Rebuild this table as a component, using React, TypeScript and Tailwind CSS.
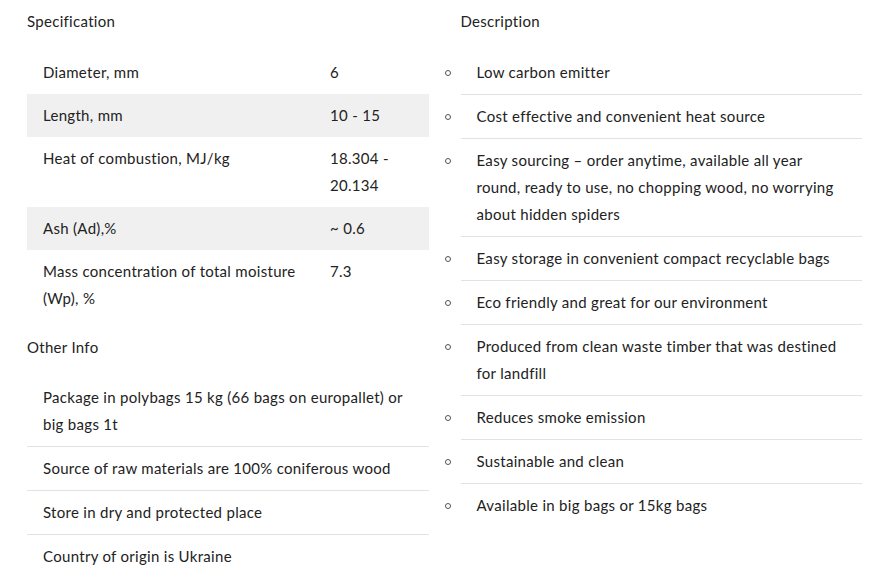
const SPECS = [
  { label: 'Diameter, mm', value: '6' },
  { label: 'Length, mm', value: '10 - 15' },
  { label: 'Heat of combustion, MJ/kg', value: '18.304 - 20.134' },
  { label: 'Ash (Ad),%', value: '~ 0.6' },
  { label: 'Mass concentration of total moisture (Wp), %', value: '7.3' },
];

const OTHER_INFO = [
  'Package in polybags 15 kg (66 bags on europallet) or big bags 1t',
  'Source of raw materials are 100% coniferous wood',
  'Store in dry and protected place',
  'Country of origin is Ukraine',
];

const DESCRIPTION = [
  'Low carbon emitter',
  'Cost effective and convenient heat source',
  'Easy sourcing – order anytime, available all year round, ready to use, no chopping wood, no worrying about hidden spiders',
  'Easy storage in convenient compact recyclable bags',
  'Eco friendly and great for our environment',
  'Produced from clean waste timber that was destined for landfill',
  'Reduces smoke emission',
  'Sustainable and clean',
  'Available in big bags or 15kg bags',
];

export default function App() {
  return (
    <div className="min-h-screen bg-white pl-[27px] pr-[25px] pt-2 font-['Lato',sans-serif] text-[15px] leading-[27px] tracking-[0.3px] text-[#222]">
      <div className="grid grid-cols-2 gap-8">
        <section>
          <h2 className="mb-4 font-normal">Specification</h2>
          <div>
            {SPECS.map(({ label, value }, i) => (
              <div key={label} className={`flex py-2 ${i % 2 === 1 ? 'bg-[#f0f0f0]' : ''}`}>
                <div className="w-[287px] shrink-0 px-4">{label}</div>
                <div className="w-[115px] px-4">{value}</div>
              </div>
            ))}
          </div>

          <h2 className="mb-[15px] mt-[14px] font-normal">Other Info</h2>
          <ul>
            {OTHER_INFO.map((item) => (
              <li key={item} className="border-b border-[#e2e2e2] px-4 py-2">
                {item}
              </li>
            ))}
          </ul>
        </section>

        <section>
          <h2 className="mb-4 font-normal">Description</h2>
          <ul>
            {DESCRIPTION.map((item, i) => (
              <li key={item} className="relative">
                <span className="absolute left-[-16px] top-[19px] h-[6px] w-[6px] rounded-full border border-[#555]" />
                <div
                  className={`py-2 pl-4 pr-[18px] ${i < DESCRIPTION.length - 1 ? 'border-b border-[#e2e2e2]' : ''}`}
                >
                  {item}
                </div>
              </li>
            ))}
          </ul>
        </section>
      </div>
    </div>
  );
}
